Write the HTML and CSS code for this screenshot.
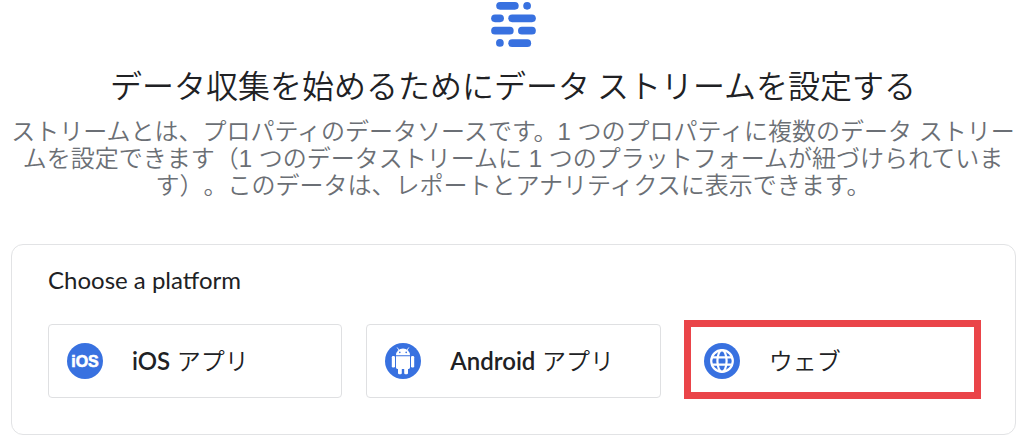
FILE: index.html
```
<!DOCTYPE html>
<html lang="ja">
<head>
    <meta charset="UTF-8">
    <meta name="viewport" content="width=device-width, initial-scale=1.0">
    <title>データ ストリームを設定する</title>
    <link rel="stylesheet" href="styles.css">
</head>
<body>
    <header class="intro">
        <svg class="stream-logo" viewBox="34 6 133 134" aria-hidden="true">
            <rect x="49" y="6" width="67" height="23" rx="11.5"/>
            <circle cx="141" cy="17.5" r="11.5"/>
            <rect x="34" y="43" width="38" height="23" rx="11.5"/>
            <rect x="85" y="43" width="82" height="23" rx="11.5"/>
            <rect x="34" y="80" width="67" height="23" rx="11.5"/>
            <rect x="114" y="80" width="53" height="23" rx="11.5"/>
            <circle cx="60" cy="128" r="11.5"/>
            <rect x="85" y="117" width="68" height="23" rx="11.5"/>
        </svg>
        <h1>データ収集を始めるためにデータ ストリームを設定する</h1>
        <p>ストリームとは、プロパティのデータソースです。1 つのプロパティに複数のデータ ストリー<br>ムを設定できます（1 つのデータストリームに 1 つのプラットフォームが紐づけられていま<br>す）。このデータは、レポートとアナリティクスに表示できます。</p>
    </header>

    <section class="platform-card">
        <h2>Choose a platform</h2>
        <div class="platforms">
            <button class="platform" type="button">
                <svg class="platform-icon" viewBox="0 0 36 36" aria-hidden="true">
                    <circle cx="18" cy="18" r="18" fill="#3871e0"/>
                    <text class="ios-mark" x="18" y="24" text-anchor="middle">iOS</text>
                </svg>
                <span><b>iOS</b> アプリ</span>
            </button>
            <button class="platform" type="button">
                <svg class="platform-icon" viewBox="0 0 36 36" aria-hidden="true">
                    <circle cx="18" cy="18" r="18" fill="#3871e0"/>
                    <g fill="#fff">
                        <path d="M11 12.2a7 6.6 0 0 1 14 0z"/>
                        <path d="M11 13.2h14v11.3a1.4 1.4 0 0 1-1.4 1.4H12.4a1.4 1.4 0 0 1-1.4-1.4z"/>
                        <rect x="6.8" y="13" width="3.2" height="11.4" rx="1.2"/>
                        <rect x="26" y="13" width="3.2" height="11.4" rx="1.2"/>
                        <rect x="13" y="23" width="3.8" height="8.2" rx="1.2"/>
                        <rect x="19.2" y="23" width="3.8" height="8.2" rx="1.2"/>
                    </g>
                    <path d="M12.4 4.8l2 2.8M23.6 4.8l-2 2.8" stroke="#fff" stroke-width="0.9" stroke-linecap="round"/>
                    <circle cx="14.8" cy="9.4" r="0.8" fill="#3871e0"/>
                    <circle cx="21.2" cy="9.4" r="0.8" fill="#3871e0"/>
                </svg>
                <span><b>Android</b> アプリ</span>
            </button>
            <button class="platform highlighted" type="button">
                <svg class="platform-icon" viewBox="0 0 36 36" aria-hidden="true">
                    <circle cx="18" cy="18" r="18" fill="#3871e0"/>
                    <g fill="none" stroke="#fff" stroke-width="2.2">
                        <circle cx="18" cy="18" r="10.8"/>
                        <ellipse cx="18" cy="18" rx="4.6" ry="10.8"/>
                        <path d="M8.2 14.4h19.6M8.2 21.6h19.6"/>
                    </g>
                </svg>
                <span>ウェブ</span>
            </button>
        </div>
    </section>
</body>
</html>
```
FILE: styles.css
```
* {
    margin: 0;
    padding: 0;
    box-sizing: border-box;
}

body {
    font-family: Lato, "Noto Sans CJK JP", sans-serif;
    color: #202124;
    background-color: #fff;
}

.intro {
    display: flex;
    flex-direction: column;
    align-items: center;
    padding: 2px 0 0 2px;
    text-align: center;
    text-spacing-trim: space-all;
}

.stream-logo {
    width: 45px;
    height: 45px;
    fill: #3871e0;
}

h1 {
    margin-top: 13px;
    font-family: "Noto Sans CJK JP", sans-serif;
    font-size: 32px;
    font-weight: 350;
    line-height: 48px;
}

.intro p {
    margin-top: 10px;
    font-family: "Liberation Sans", "Noto Sans CJK JP", sans-serif;
    font-size: 24px;
    font-weight: 350;
    line-height: 27px;
    color: #6b6f75;
}

.platform-card {
    margin: 45px 8px 4px 11px;
    padding: 19px 36px 36px;
    border: 1px solid #e2e3e5;
    border-radius: 12px;
}

h2 {
    font-size: 24px;
    font-weight: 400;
    line-height: 32px;
}

.platforms {
    display: grid;
    grid-template-columns: repeat(3, 1fr);
    gap: 24px;
    margin-top: 28px;
}

.platform {
    position: relative;
    display: flex;
    align-items: center;
    gap: 29px;
    height: 74px;
    padding: 0 18px;
    border: 1px solid #dfe0e2;
    border-radius: 4px;
    background-color: #fff;
    color: inherit;
    font-family: inherit;
    font-size: 24px;
    font-weight: 350;
    line-height: 32px;
    cursor: pointer;
}

.platform b {
    font-weight: 600;
}

.platform-icon {
    width: 36px;
    height: 36px;
    flex-shrink: 0;
}

.ios-mark {
    font-family: "Liberation Sans", sans-serif;
    font-size: 16px;
    font-weight: 700;
    fill: #fff;
    stroke: #fff;
    stroke-width: 0.6px;
}

/* red frame drawn over the option's own border */
.highlighted::after {
    content: '';
    position: absolute;
    inset: -5px -3px -2px -2px;
    border: 7px solid #ea4449;
}
```
